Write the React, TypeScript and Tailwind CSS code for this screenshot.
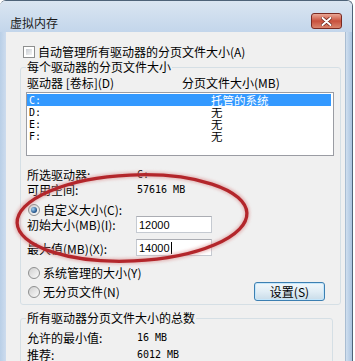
import React from "react";

const F = "font-[family-name:'Noto_Sans_CJK_SC',sans-serif]";
const MONO = "font-[family-name:'DejaVu_Sans_Mono',monospace] text-[10px]";

function Checkbox() {
  return (
    <span className="w-[12px] h-[12px] border border-[#8e8f8f] bg-white p-[2px] flex shrink-0">
      <span className="flex-1 bg-gradient-to-br from-[#c9cdd3] to-[#f4f4f4]" />
    </span>
  );
}

function Radio({ checked }: { checked?: boolean }) {
  return (
    <span className="w-[12px] h-[12px] rounded-full border border-[#8e8f8f] bg-gradient-to-br from-[#cfcfcf] to-[#fbfbfb] flex items-center justify-center shrink-0">
      {checked ? (
        <span className="w-[6px] h-[6px] rounded-full bg-[radial-gradient(circle_at_35%_35%,#a8d6f7,#1b4d84_70%)]" />
      ) : null}
    </span>
  );
}

const rows = [
  { d: "C:", v: "托管的系统", sel: true },
  { d: "D:", v: "无", sel: false },
  { d: "E:", v: "无", sel: false },
  { d: "F:", v: "无", sel: false },
];

export default function App() {
  return (
    <div className={`w-[355px] h-[361px] overflow-hidden bg-white relative ${F} text-[12px] leading-[14px] text-black`}>
      <div className="w-[353px] h-[440px] flex flex-col border-t border-r border-[#4e6378] rounded-t-[6px] overflow-hidden">
        <div className="h-[31px] shrink-0 flex justify-between bg-gradient-to-b from-[#dae5f1] to-[#c3d6eb]">
          <span className="ml-[10px] mt-[15px] h-[14px] leading-[14px] text-[#1a1a1a]">虚拟内存</span>
          <div className="mt-[12px] mr-[10px] w-[31px] h-[16px] rounded-[3px] border border-[#7a2a22] bg-gradient-to-b from-[#e9a796] via-[#c8503d] to-[#d9846d] flex items-center justify-center">
            <svg width="11" height="9" viewBox="0 0 11 9">
              <path d="M1.5 1 L9.5 8 M9.5 1 L1.5 8" stroke="#6b2219" strokeWidth="3.4" strokeLinecap="round" />
              <path d="M1.5 1 L9.5 8 M9.5 1 L1.5 8" stroke="#ffffff" strokeWidth="2" strokeLinecap="round" />
            </svg>
          </div>
        </div>
        <div className="flex flex-1">
          <div className="w-[6px] bg-gradient-to-r from-[#b9cfe7] to-[#cddcee]" />
          <div className="flex-1 bg-[#f0f0f0] flex flex-col">
            <div className="mt-[14px] ml-[17px] h-[12px] flex items-center gap-[3px]">
              <Checkbox />
              <span>自动管理所有驱动器的分页文件大小(A)</span>
            </div>

            <fieldset className="mt-[2px] ml-[14px] w-[320px] border border-[#d5dfe5] rounded-[3px] pl-[6px] pr-[6px] pb-[3px]">
              <legend className="h-[14px] leading-[14px] px-[1px] -ml-[1px]">每个驱动器的分页文件大小</legend>
              <div className="mt-[2px] h-[14px] grid grid-cols-[155px_1fr]">
                <span>驱动器 [卷标](D)</span>
                <span>分页文件大小(MB)</span>
              </div>
              <div className="mt-[2px] -ml-[1px] w-[308px] h-[64px] border border-[#9a9ca3] bg-white pt-[1px] pr-[2px]">
                {rows.map((r) => (
                  <div
                    key={r.d}
                    className={`h-[12px] grid grid-cols-[182px_1fr] items-center pl-[2px] ${r.sel ? "bg-[#3399ff] text-white" : ""}`}
                  >
                    <span className={`${MONO} leading-[11px]`}>{r.d}</span>
                    <span className="text-[11.5px] leading-[11px]">{r.v}</span>
                  </div>
                ))}
              </div>
              <div className="mt-[12px] h-[14px] grid grid-cols-[110px_1fr] items-center">
                <span>所选驱动器:</span>
                <span className={MONO}>C:</span>
              </div>
              <div className="mt-[1px] h-[14px] grid grid-cols-[110px_1fr] items-center">
                <span>可用空间:</span>
                <span className={MONO}>57616 MB</span>
              </div>
              <div className="mt-[7px] h-[12px] flex items-center gap-[3px] ml-[1px]">
                <Radio checked />
                <span>自定义大小(C):</span>
              </div>
              <div className="h-[17px] grid grid-cols-[109px_76px] items-center">
                <span>初始大小(MB)(I):</span>
                <div className="h-[17px] border border-[#c5cad1] border-t-[#abadb3] bg-white pl-[2px] flex items-center font-[family-name:'Liberation_Sans',sans-serif] text-[11px]">
                  12000
                </div>
              </div>
              <div className="mt-[6px] h-[17px] grid grid-cols-[109px_76px] items-center">
                <span className="mt-[3px]">最大值(MB)(X):</span>
                <div className="h-[17px] border border-[#c5cad1] border-t-[#abadb3] bg-white pl-[2px] flex items-center font-[family-name:'Liberation_Sans',sans-serif] text-[11px]">
                  14000
                  <span className="w-[1px] h-[12px] bg-black ml-[1px]" />
                </div>
              </div>
              <div className="mt-[11px] h-[12px] flex items-center gap-[3px] ml-[1px]">
                <Radio />
                <span>系统管理的大小(Y)</span>
              </div>
              <div className="mt-[3px] h-[19px] flex items-center justify-between">
                <div className="flex items-center gap-[3px] ml-[1px]">
                  <Radio />
                  <span>无分页文件(N)</span>
                </div>
                <div className="mr-[9px] w-[71px] h-[19px] rounded-[3px] border border-[#3c7fb1] bg-gradient-to-b from-[#f1f7fb] via-[#e1edf5] to-[#c9dce9] shadow-[inset_0_0_0_1px_#c4e6fb] flex items-center justify-center">
                  设置(S)
                </div>
              </div>
            </fieldset>

            <fieldset className="mt-[6px] ml-[14px] w-[313px] border border-[#d5dfe5] rounded-[3px] pl-[6px] pr-[6px] pb-[8px]">
              <legend className="h-[14px] leading-[14px] px-[1px] -ml-[1px]">所有驱动器分页文件大小的总数</legend>
              <div className="mt-[6px] h-[14px] grid grid-cols-[110px_1fr] items-center">
                <span>允许的最小值:</span>
                <span className={MONO}>16 MB</span>
              </div>
              <div className="mt-[3px] h-[13px] grid grid-cols-[110px_1fr] items-center">
                <span>推荐:</span>
                <span className={MONO}>6012 MB</span>
              </div>
            </fieldset>
          </div>
          <div className="w-[7px] border-l border-[#a9bdd2] bg-gradient-to-r from-[#d0dfef] to-[#aac4e0]" />
        </div>
      </div>

      <svg className="absolute left-0 top-0 pointer-events-none" width="355" height="361">
        <defs>
          <filter id="blurred" x="-10%" y="-20%" width="120%" height="140%">
            <feGaussianBlur stdDeviation="1.6" />
          </filter>
        </defs>
        <g transform="rotate(-2.5 132 218)">
          <ellipse cx="132" cy="218" rx="115" ry="43" fill="none" stroke="#d98a8a" strokeWidth="6" opacity="0.55" filter="url(#blurred)" />
          <ellipse cx="132" cy="218" rx="115" ry="43" fill="none" stroke="#b3262b" strokeWidth="3.3" />
        </g>
      </svg>
    </div>
  );
}
